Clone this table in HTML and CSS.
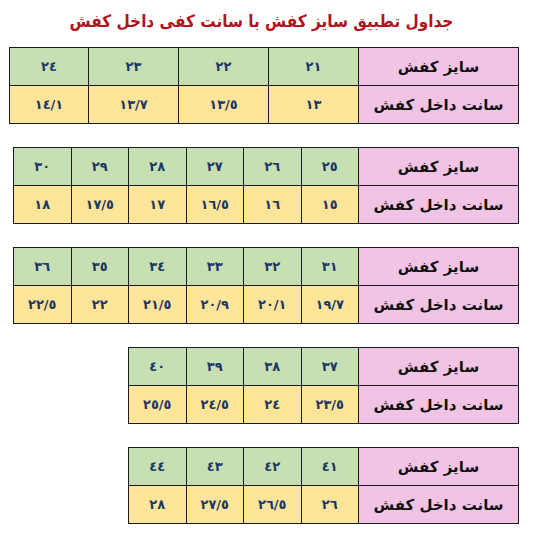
FILE: index.html
```html
<!DOCTYPE html>
<html lang="fa" dir="rtl">
<head>
<meta charset="utf-8">
<title>جداول تطبیق سایز کفش</title>
<link rel="stylesheet" href="styles.css">
</head>
<body>
<div class="page">
  <h1 class="title">جداول تطبیق سایز کفش با سانت کفی داخل کفش</h1>

  <table class="chart wide four">
    <tr class="size"><th>سایز کفش</th><td>٢١</td><td>٢٢</td><td>٢٣</td><td class="last">٢٤</td></tr>
    <tr class="cm"><th>سانت داخل کفش</th><td>١٣</td><td>١٣/٥</td><td>١٣/٧</td><td class="last">١٤/١</td></tr>
  </table>

  <table class="chart wide six">
    <tr class="size"><th>سایز کفش</th><td>٢٥</td><td>٢٦</td><td>٢٧</td><td>٢٨</td><td>٢٩</td><td>٣٠</td></tr>
    <tr class="cm"><th>سانت داخل کفش</th><td>١٥</td><td>١٦</td><td>١٦/٥</td><td>١٧</td><td>١٧/٥</td><td>١٨</td></tr>
  </table>

  <table class="chart wide six">
    <tr class="size"><th>سایز کفش</th><td>٣١</td><td>٣٢</td><td>٣٣</td><td>٣٤</td><td>٣٥</td><td>٣٦</td></tr>
    <tr class="cm"><th>سانت داخل کفش</th><td>١٩/٧</td><td>٢٠/١</td><td>٢٠/٩</td><td>٢١/٥</td><td>٢٢</td><td>٢٢/٥</td></tr>
  </table>

  <table class="chart narrow">
    <tr class="size"><th>سایز کفش</th><td>٣٧</td><td>٣٨</td><td>٣٩</td><td>٤٠</td></tr>
    <tr class="cm"><th>سانت داخل کفش</th><td>٢٣/٥</td><td>٢٤</td><td>٢٤/٥</td><td>٢٥/٥</td></tr>
  </table>

  <table class="chart narrow">
    <tr class="size"><th>سایز کفش</th><td>٤١</td><td>٤٢</td><td>٤٣</td><td>٤٤</td></tr>
    <tr class="cm"><th>سانت داخل کفش</th><td>٢٦</td><td>٢٦/٥</td><td>٢٧/٥</td><td>٢٨</td></tr>
  </table>
</div>
</body>
</html>
```

FILE: styles.css
```css
html, body {
  margin: 0;
  padding: 0;
  background: #ffffff;
}

.page {
  direction: rtl;
  display: flex;
  flex-direction: column;
  align-items: flex-start;
  padding: 0 16px 0 0;
  font-family: "DejaVu Sans", sans-serif;
}

.title {
  align-self: stretch;
  margin: 0;
  height: 47px;
  line-height: 42px;
  text-align: center;
  padding-left: 4px;
  font-family: "DejaVu Sans Condensed", "DejaVu Sans", sans-serif;
  font-size: 17px;
  font-weight: bold;
  color: #b0141c;
}

.chart {
  border-collapse: collapse;
  table-layout: fixed;
  margin-bottom: 23px;
}

.chart.wide { width: 506px; }
.chart.narrow { width: 391px; }

.chart th,
.chart td {
  border: 1.5px solid #1a1a1a;
  height: 37px;
  padding: 0;
  text-align: center;
  vertical-align: middle;
  font-weight: bold;
}

.chart th {
  width: 159px;
  background: #f1c4e5;
  color: #111111;
  font-size: 15px;
}

.chart td {
  color: #1c3766;
  font-size: 13px;
  letter-spacing: 3px;
}

.chart .size td { background: #c6e0b4; }
.chart .cm td { background: #ffe59a; }

.chart.four td { width: 89px; }
.chart.four td.last { width: 78px; }
```
